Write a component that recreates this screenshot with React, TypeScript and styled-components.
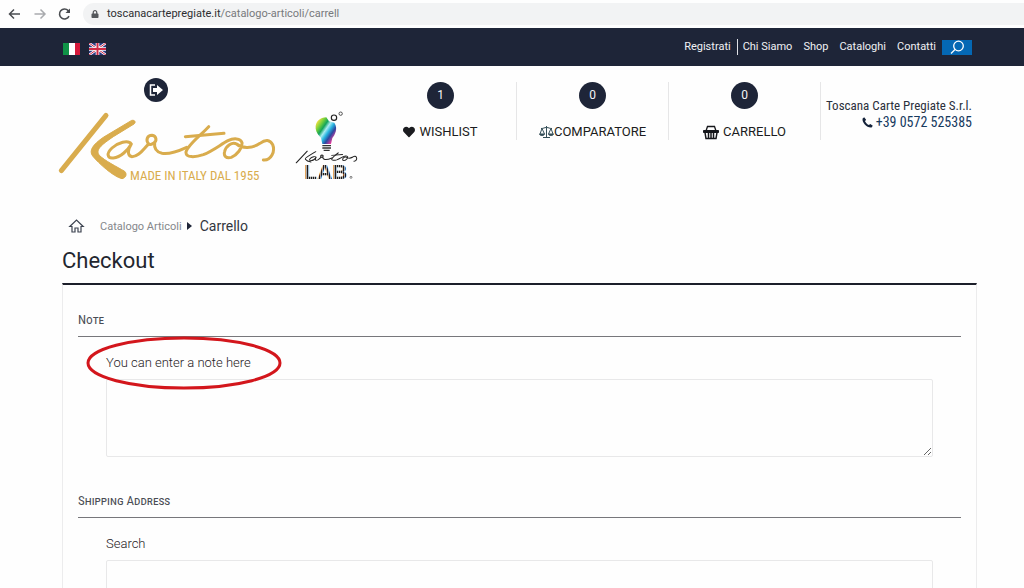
import React from "react";
import styled, { createGlobalStyle } from "styled-components";
import { FaHeart, FaLock } from "react-icons/fa";

const navy = "#1e2538";
const gold = "#d9ac4d";

const GlobalStyle = createGlobalStyle`
  *, *::before, *::after { box-sizing: border-box; }
  html { scrollbar-width: none; }
  body { margin: 0; background: #fefefe; color: #2a2d33; font-family: Roboto, "Liberation Sans", sans-serif; }
  h1, h2 { margin: 0; font-weight: 400; }
  a { color: inherit; text-decoration: none; }
  button { border: 0; padding: 0; background: none; color: inherit; cursor: pointer; }
  svg { display: block; flex: none; overflow: visible; }
`;

const BrowserBar = styled.div`
  display: flex;
  align-items: center;
  height: 28px;
  padding-left: 8px;
  gap: 12px;
`;

const BrowserButton = styled.button<{ $muted?: boolean }>`
  width: 13px;
  height: 14px;
  color: ${(p) => (p.$muted ? "#a9abae" : "#4a4d51")};
`;

const AddressBar = styled.div`
  display: flex;
  flex: 1;
  align-items: center;
  gap: 8px;
  height: 22px;
  padding-left: 8px;
  border-radius: 11px 0 0 11px;
  background: #f2f3f4;
  color: #55585c;
`;

const AddressText = styled.span`
  font: 11px/14px Roboto, "Noto Sans", sans-serif;
  color: #77797c;
  b { font-weight: 400; color: #2c2d30; }
`;

const TopBar = styled.nav`
  display: flex;
  align-items: center;
  justify-content: space-between;
  height: 38px;
  padding: 0 52px 0 63px;
  background: ${navy};
  color: #f0f1f4;
`;

const Flags = styled.div`
  display: flex;
  gap: 9px;
  padding-top: 4px;
`;

const Menu = styled.div`
  display: flex;
  align-items: center;
  gap: 11px;
  font-size: 11px;
  line-height: 16px;
`;

const MenuLead = styled.a`
  margin-right: -6px;
  padding-right: 6px;
  border-right: 1px solid #dfe1e6;
`;

const SearchButton = styled.button`
  display: grid;
  place-items: center;
  width: 30px;
  height: 15px;
  margin-left: -5px;
  background: #0468b4;
`;

const Header = styled.header`
  display: flex;
  align-items: flex-start;
  padding: 0 52px 0 58px;
  height: 140px;
`;

const Brand = styled.div`
  display: flex;
  flex: 1;
  align-items: flex-end;
  gap: 17px;
  padding-top: 12px;
`;

const KartosBlock = styled.div`
  display: flex;
  flex-direction: column;
  gap: 8px;
  width: 218px;
`;

const ExitButton = styled.button`
  display: grid;
  place-items: center;
  width: 24px;
  height: 24px;
  margin-left: 86px;
  border-radius: 50%;
  background: ${navy};
  color: #fff;
`;

const Counter = styled.a`
  display: flex;
  flex-direction: column;
  align-items: center;
  gap: 14px;
  width: 152px;
  height: 58px;
  margin-top: 16px;
  border-right: 1px solid #e6e6e7;
`;

const Badge = styled.span`
  width: 27px;
  height: 27px;
  flex: none;
  border-radius: 50%;
  background: ${navy};
  color: #f4f4f6;
  font-size: 12px;
  line-height: 27px;
  text-align: center;
`;

const CounterLabel = styled.span<{ $gap: number }>`
  display: flex;
  align-items: center;
  gap: ${(p) => p.$gap}px;
  font-size: 13px;
  line-height: 18px;
  color: #1b1c20;
`;

const Contact = styled.address`
  width: 151px;
  padding-top: 32px;
  font: 13px/16px "Roboto Condensed", Roboto, sans-serif;
  text-align: right;
  white-space: nowrap;
  color: #2b303c;
`;

const Phone = styled.a`
  display: flex;
  justify-content: flex-end;
  align-items: center;
  gap: 3px;
  font-size: 14px;
  color: #173a5e;
`;

const Main = styled.main`
  padding: 0 47px 0 62px;
`;

const Breadcrumb = styled.nav`
  display: flex;
  align-items: center;
  height: 40px;
  padding-left: 7px;
  font-size: 11px;
  color: #85878b;
`;

const Crumb = styled.a`
  margin: 0 5px 0 16px;
`;

const CurrentCrumb = styled.span`
  margin-left: 8px;
  font-size: 14px;
  color: #33363e;
`;

const Title = styled.h1`
  padding: 2px 0 9px;
  font-size: 22px;
  line-height: 26px;
  color: #23262f;
`;

const Panel = styled.form`
  padding: 0 15px;
  border: 1px solid #ececed;
  border-top: 2px solid #1c1f2a;
  border-bottom: 0;
`;

const Section = styled.section`
  padding-bottom: 9px;
`;

const SectionTitle = styled.h2`
  height: 52px;
  padding-top: 26px;
  border-bottom: 1px solid #77777b;
  font-family: "Roboto Condensed", Roboto, sans-serif;
  font-size: 13px;
  line-height: 18px;
  font-variant: small-caps;
  color: #4a4d55;
`;

const Field = styled.div`
  padding: 15px 28px 0;
`;

const Label = styled.label`
  position: relative;
  display: inline-block;
  margin-bottom: 7px;
  font-size: 13px;
  font-weight: 300;
  line-height: 18px;
  color: #1e2024;
`;

const Highlight = styled.svg`
  position: absolute;
  left: -20px;
  top: -18px;
  pointer-events: none;
`;

const NoteArea = styled.textarea`
  display: block;
  width: 100%;
  height: 78px;
  border: 1px solid #e8e8e9;
  border-radius: 2px;
  background: #fefefe;
`;

const SearchInput = styled.input`
  display: block;
  width: 100%;
  height: 34px;
  border: 1px solid #e8e8e9;
  border-radius: 2px;
  background: #fefefe;
`;

const Arrow = ({ flip }: { flip?: boolean }) => (
  <svg width="13" height="14" viewBox="0 0 13 14" fill="none" stroke="currentColor" strokeWidth="1.5">
    <path d={flip ? "M1.5 7H12M7.5 2.5 12 7l-4.500 4.500" : "M12 7H1.500M6 2.500 1.500 7 6 11.500"} />
  </svg>
);

const Reload = () => (
  <svg width="13" height="14" viewBox="0 0 13 14" fill="none" stroke="currentColor" strokeWidth="1.600">
    <path d="M11 9.200A5 5 0 1 1 10.200 3.600L11.500 5" />
    <path d="M12 1.500V6H7.500Z" fill="currentColor" stroke="none" />
  </svg>
);

const ItalianFlag = () => (
  <svg width="17" height="12" viewBox="0 0 17 12">
    <path fill="#109347" d="M0 0h6v12H0z" />
    <path fill="#fff" d="M6 0h6v12H6z" />
    <path fill="#d5183a" d="M12 0h5v12h-5z" />
  </svg>
);

const UnionJack = styled.svg`
  overflow: hidden;
`;

const BritishFlag = () => (
  <UnionJack width="17" height="12" viewBox="0 0 17 12">
    <path fill="#2c3a80" d="M0 0h17v12H0z" />
    <path stroke="#fff" strokeWidth="2.400" d="m0 0 17 12M17 0 0 12" />
    <path stroke="#cf2a45" strokeWidth="1" d="m0 0 17 12M17 0 0 12" />
    <path stroke="#fff" strokeWidth="3.600" d="M8.500 0v12M0 6h17" />
    <path stroke="#cf2a45" strokeWidth="2" d="M8.500 0v12M0 6h17" />
  </UnionJack>
);

const ScriptStrokes = () => (
  <>
    <path d="M244 222C234 208 204 218 186 234C168 250 172 266 190 264C212 262 234 240 244 222C234 238 230 258 246 260C268 260 280 236 296 222" />
    <path d="M296 222C286 210 292 196 306 196C320 198 322 214 310 220C304 224 298 224 296 222M314 216C312 232 318 246 336 250C360 254 384 244 410 232" />
    <path d="M476 170C452 196 412 226 408 246C406 264 436 262 460 254C490 242 514 222 534 212C550 204 572 204 576 218C578 234 560 256 544 262C528 266 520 258 524 244C528 228 546 214 560 222C576 236 606 236 630 220C646 208 660 208 668 224C676 244 664 272 640 270" />
    <path d="M406 200 522 190" />
  </>
);

const KartosLogo = () => (
  <svg role="img" aria-label="Kartos" width="218" height="72" viewBox="24 120 654 216" fill="none" stroke={gold} strokeLinecap="round" strokeLinejoin="round">
    <path strokeWidth="15" d="M168 136 34 302" />
    <path fill={gold} strokeWidth="3" d="M246 151C256 149 258 158 252 162L190 200C152 226 136 240 148 256C164 272 200 290 224 304C232 312 228 324 216 326C190 320 146 280 128 258C116 242 128 224 160 202Z" />
    <g strokeWidth="9"><ScriptStrokes /></g>
    <text x="240" y="329" fontFamily="'Roboto Condensed', 'Liberation Sans', sans-serif" fontSize="39" fill={gold} stroke="none">MADE IN ITALY DAL 1955</text>
  </svg>
);

const KartosLabLogo = () => (
  <svg role="img" aria-label="Kartos Lab" width="70" height="72" viewBox="10 32 210 216" fill="none">
    <defs>
      <linearGradient id="bulb" gradientUnits="userSpaceOnUse" x1="80" y1="70" x2="138" y2="110">
        <stop offset="0" stopColor="#f0e040" />
        <stop offset=".2" stopColor="#6fce3c" />
        <stop offset=".36" stopColor="#12a35c" />
        <stop offset=".5" stopColor="#a9ecf2" />
        <stop offset=".64" stopColor="#28b5e0" />
        <stop offset=".8" stopColor="#2a4aa0" />
        <stop offset="1" stopColor="#e23c9c" />
      </linearGradient>
      <linearGradient id="stripes" gradientUnits="userSpaceOnUse" x1="46" y1="0" x2="52" y2="0" spreadMethod="repeat">
        <stop offset="0" stopColor="#1c1c1c" />
        <stop offset=".55" stopColor="#1c1c1c" />
        <stop offset=".55" stopColor="#a8a8a8" />
        <stop offset="1" stopColor="#a8a8a8" />
      </linearGradient>
    </defs>
    <circle cx="133" cy="55" r="8" stroke="#222" strokeWidth="3.500" />
    <circle cx="153" cy="43" r="5" stroke="#333" strokeWidth="2.500" />
    <path fill="url(#bulb)" d="M78 88C76 66 92 54 110 54L118 66 134 70C146 88 136 106 128 116L124 134H98L94 116C86 106 80 100 78 88Z" />
    <path stroke="#333" strokeWidth="4" d="M98 139h26M98 146h26M102 153h18" />
    <g stroke="#222" strokeWidth="11" strokeLinecap="round" transform="translate(10 118) scale(.285 .25)">
      <path d="M150 150 34 290M240 156C170 204 120 230 130 246C140 262 160 274 190 280" />
      <ScriptStrokes />
    </g>
    <text x="44" y="238" fontFamily="'Liberation Sans', sans-serif" fontWeight="700" fontSize="63" fill="url(#stripes)">LAB</text>
    <circle cx="184" cy="234" r="3" stroke="#444" strokeWidth="2" />
  </svg>
);

const Scales = () => (
  <svg width="15" height="14" viewBox="0 0 15 14" fill="none" stroke="#354f58">
    <path d="M7.500 1v11M4 12.500h7M2 3.500c3 0 3-1 5.500-1s2.500 1 5.500 1M3 3.500 1 9M3 3.500 5.500 9M12 3.500 9.500 9M12 3.500 14 9" />
    <path fill="#354f58" d="M.5 9h5c-.5 2-4.500 2-5 0ZM9.500 9h5c-.5 2-4.500 2-5 0Z" />
  </svg>
);

export default function App() {
  return (
    <>
      <GlobalStyle />
      <BrowserBar>
        <BrowserButton aria-label="Back"><Arrow /></BrowserButton>
        <BrowserButton aria-label="Forward" $muted><Arrow flip /></BrowserButton>
        <BrowserButton aria-label="Reload"><Reload /></BrowserButton>
        <AddressBar>
          <FaLock size={8} />
          <AddressText><b>toscanacartepregiate.it</b>/catalogo-articoli/carrell</AddressText>
        </AddressBar>
      </BrowserBar>
      <TopBar>
        <Flags>
          <a href="#it" aria-label="Italiano"><ItalianFlag /></a>
          <a href="#en" aria-label="English"><BritishFlag /></a>
        </Flags>
        <Menu>
          <MenuLead href="#registrati">Registrati</MenuLead>
          <a href="#chi-siamo">Chi Siamo</a>
          <a href="#shop">Shop</a>
          <a href="#cataloghi">Cataloghi</a>
          <a href="#contatti">Contatti</a>
          <SearchButton aria-label="Cerca">
            <svg width="15" height="15" viewBox="0 0 15 15" fill="none" stroke="#fff" strokeWidth="1.300">
              <circle cx="8.500" cy="6" r="4.800" />
              <path d="M5 9.500 1 13.500" />
            </svg>
          </SearchButton>
        </Menu>
      </TopBar>
      <Header>
        <Brand>
          <KartosBlock>
            <ExitButton aria-label="Esci">
              <svg width="16" height="14" viewBox="0 0 16 14">
                <path fill="none" stroke="currentColor" strokeWidth="1.500" d="M7 2H2.500v10H7" />
                <path fill="currentColor" d="M5 5h4V2l6 5-6 5V9H5z" />
              </svg>
            </ExitButton>
            <KartosLogo />
          </KartosBlock>
          <KartosLabLogo />
        </Brand>
        <Counter href="#wishlist">
          <Badge>1</Badge>
          <CounterLabel $gap={4}><FaHeart size={12} />WISHLIST</CounterLabel>
        </Counter>
        <Counter href="#comparatore">
          <Badge>0</Badge>
          <CounterLabel $gap={0}><Scales />COMPARATORE</CounterLabel>
        </Counter>
        <Counter href="#carrello">
          <Badge>0</Badge>
          <CounterLabel $gap={4}>
            <svg width="16" height="15" viewBox="0 0 16 15" fill="none" stroke="#15161a">
              <path strokeWidth="1.300" d="M3 6 4.500 1.500h7L13 6" />
              <path fill="#15161a" d="M.5 5.500h15v2H.5z" />
              <path strokeWidth="1.500" d="M2 7.500 3 13.500h10l1-6M5.500 7.500v6M8 7.500v6M10.500 7.500v6" />
            </svg>
            CARRELLO
          </CounterLabel>
        </Counter>
        <Contact>
          Toscana Carte Pregiate S.r.l.
          <Phone href="tel:+390572525385">
            <svg width="11" height="11" viewBox="0 0 11 11"><path fill="#15233a" d="M2.200.3.600 1.400C-.4 5.500 5.500 11.300 9.600 10.400L10.800 8.800 8.300 6.900 6.900 8C5.500 7.500 3.600 5.600 3 4.200L4.100 2.800Z" /></svg>
            +39 0572 525385
          </Phone>
        </Contact>
      </Header>
      <Main>
        <Breadcrumb aria-label="Breadcrumb">
          <a href="#home" aria-label="Home">
            <svg width="15" height="14" viewBox="0 0 15 14" fill="none" stroke="#3c4350" strokeWidth="1.200">
              <path d="M.8 7.500 7.500 1l6.700 6.500H12V13H9V9H6v4H3V7.500Z" />
            </svg>
          </a>
          <Crumb href="#catalogo">Catalogo Articoli</Crumb>
          <svg width="5" height="8" viewBox="0 0 5 8"><path fill={navy} d="m0 0 5 4-5 4z" /></svg>
          <CurrentCrumb>Carrello</CurrentCrumb>
        </Breadcrumb>
        <Title>Checkout</Title>
        <Panel>
          <Section>
            <SectionTitle>Note</SectionTitle>
            <Field>
              <Label htmlFor="note">
                You can enter a note here
                <Highlight width="198" height="54" viewBox="0 0 198 54" fill="none" stroke="#d3161c" strokeWidth="3">
                  <ellipse cx="98" cy="27" rx="96" ry="25" />
                </Highlight>
              </Label>
              <NoteArea id="note" />
            </Field>
          </Section>
          <Section>
            <SectionTitle>Shipping Address</SectionTitle>
            <Field>
              <Label htmlFor="search">Search</Label>
              <SearchInput id="search" type="text" />
            </Field>
          </Section>
        </Panel>
      </Main>
    </>
  );
}
